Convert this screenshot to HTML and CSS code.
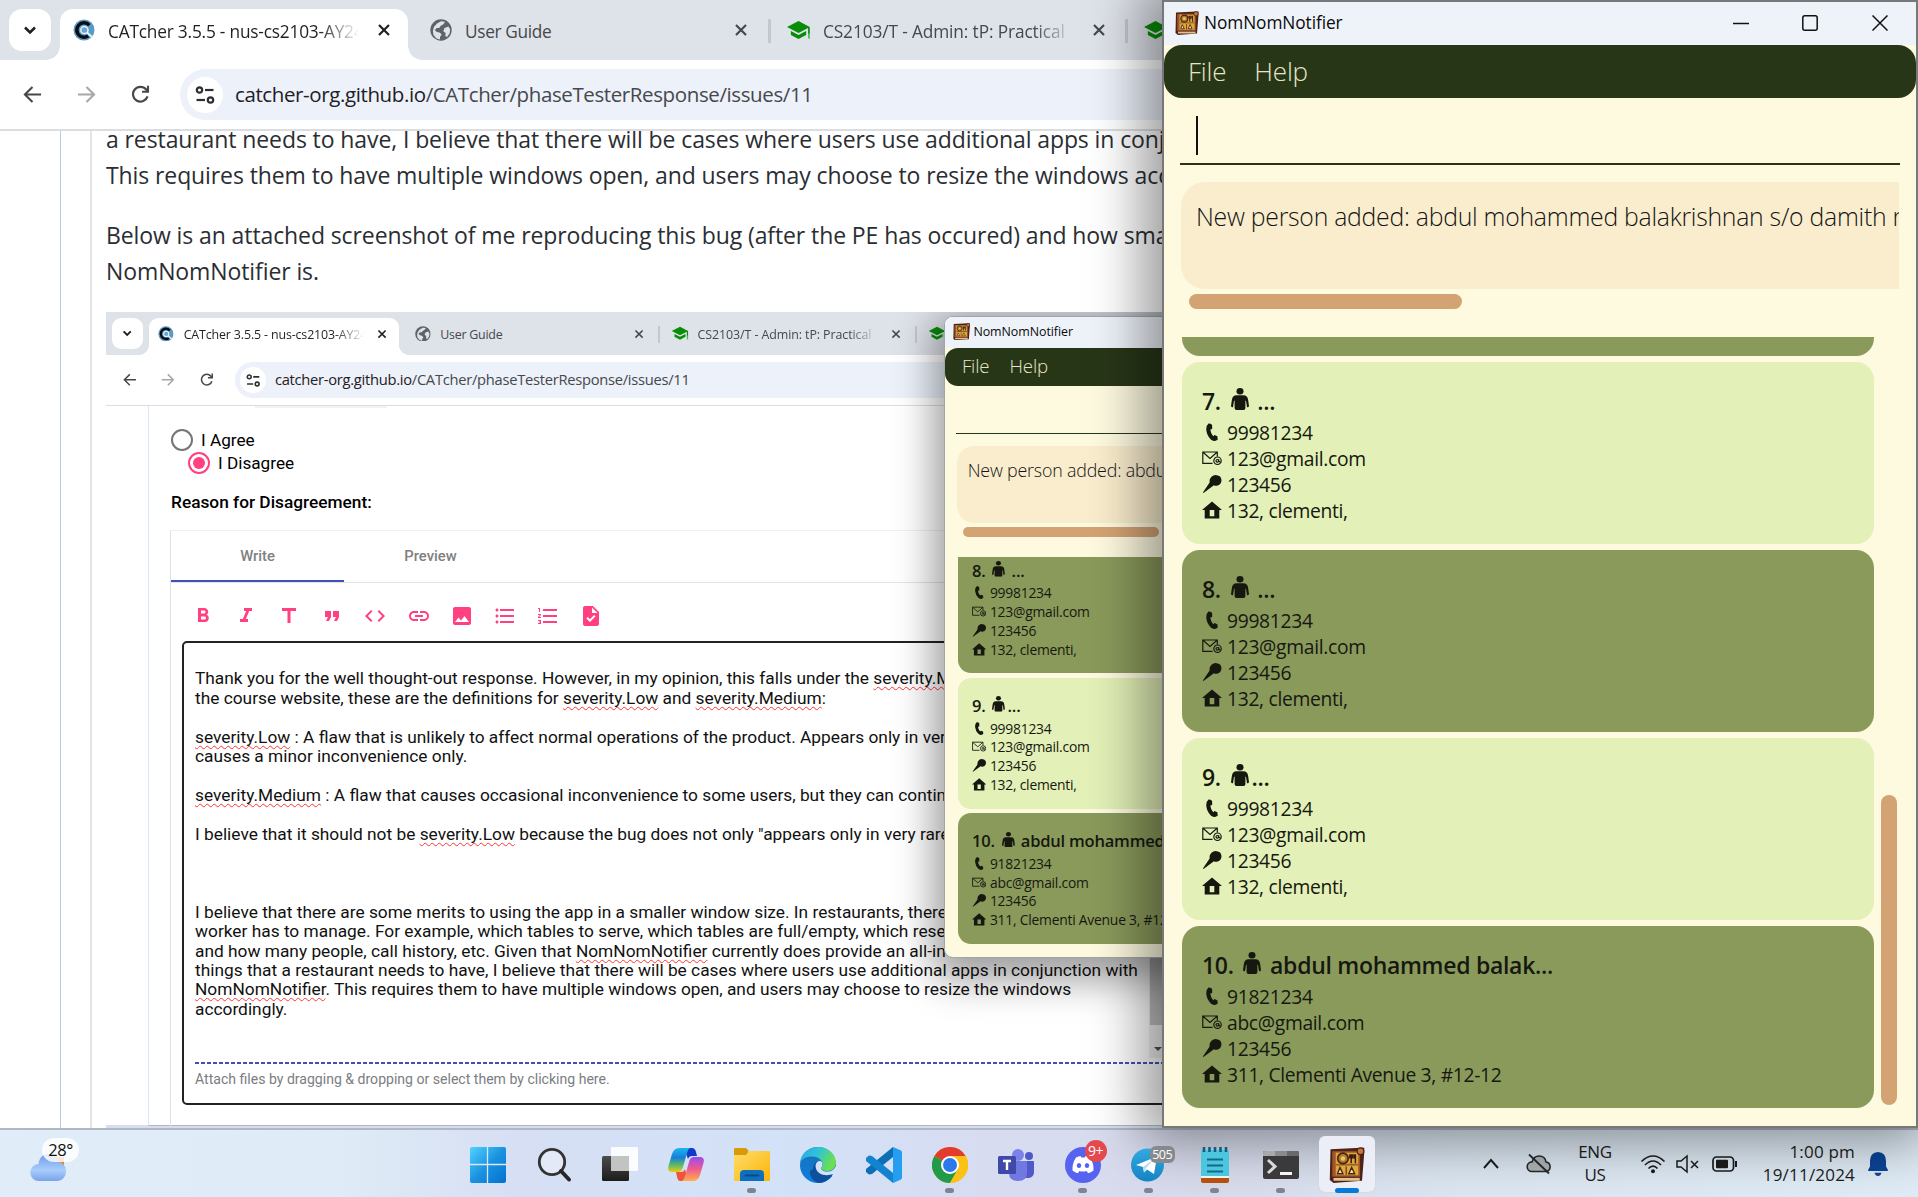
FILE: index.html
```html
<!DOCTYPE html>
<html lang="en">
<head>
<meta charset="utf-8">
<title>Desktop</title>
<link rel="stylesheet" href="styles.css">
</head>
<body>
<svg class="defs" width="0" height="0">
  <defs>
    <linearGradient id="gWin" x1="0" y1="0" x2="1" y2="1"><stop offset="0" stop-color="#4fd3ff"/><stop offset=".5" stop-color="#1b93e0"/><stop offset="1" stop-color="#0071cf"/></linearGradient>
    <linearGradient id="gDark" x1="0" y1="0" x2="0" y2="1"><stop offset="0" stop-color="#4c4c4c"/><stop offset="1" stop-color="#1c1c1c"/></linearGradient>
    <linearGradient id="gFold" x1="0" y1="0" x2="1" y2="1"><stop offset="0" stop-color="#ffdc6b"/><stop offset="1" stop-color="#fbb506"/></linearGradient>
    <linearGradient id="gCopA" x1="0" y1="0" x2="0" y2="1"><stop offset="0" stop-color="#1cb5f0"/><stop offset=".4" stop-color="#1480d8"/><stop offset=".75" stop-color="#6cbf5a"/><stop offset="1" stop-color="#f3cb10"/></linearGradient>
    <linearGradient id="gCopB" x1="0" y1="0" x2="0" y2="1"><stop offset="0" stop-color="#9a4cf0"/><stop offset=".5" stop-color="#ee5a90"/><stop offset="1" stop-color="#ffb04a"/></linearGradient>
    <linearGradient id="gEdge" x1="0" y1="0" x2="1" y2=".4"><stop offset="0" stop-color="#2aa6ea"/><stop offset=".5" stop-color="#2fc3d6"/><stop offset="1" stop-color="#6be04f"/></linearGradient>
    <linearGradient id="gEdgeB" x1="0" y1="0" x2="0" y2="1"><stop offset="0" stop-color="#1b6fb5"/><stop offset="1" stop-color="#0c7fe0"/></linearGradient>
    <linearGradient id="gCloud" x1="0" y1="0" x2="0" y2="1"><stop offset="0" stop-color="#6f9be8"/><stop offset=".6" stop-color="#a9cdfa"/><stop offset="1" stop-color="#78a3ea"/></linearGradient>
    <linearGradient id="gTel" x1="0" y1="0" x2="0" y2="1"><stop offset="0" stop-color="#32a9e0"/><stop offset="1" stop-color="#1583c4"/></linearGradient>

    <symbol id="chev" viewBox="0 0 20 20"><path d="M5 7.500l5 5 5-5" fill="none" stroke="#1f2023" stroke-width="2.600"/></symbol>
    <symbol id="catcher" viewBox="0 0 22 22"><circle cx="11" cy="11" r="10.500" fill="#5a9bc4"/><path d="M16.400 6.200A7.200 7.200 0 1 0 11 18.200c1.600 0 3-.4 4.200-1.300" fill="none" stroke="#0b0d12" stroke-width="3.400"/><circle cx="11.400" cy="11" r="3.600" fill="#6ba6cd" stroke="#e8f4fb" stroke-width="1.500"/><path d="M14 13.500l5 4.500" stroke="#e8f4fb" stroke-width="1.800"/></symbol>
    <symbol id="globe" viewBox="0 0 22 22"><circle cx="11" cy="11" r="10.700" fill="#5f6368"/><path d="M7 4.500l4-2.200 4 .4-1.500 2.600-2.800 1.500-1.200 2-3.200.4-1.500 2L7 13l2.500.5 2.200 2-1.700 2.500v2.600l-3.500-1.200-3-3.500-.6-4 1-4z" fill="#dee2e9"/><path d="M14.500 9l4-1.500 1.700 3-.6 4-2.600 3.600-1.700-1.200.3-3-2.300-1.600z" fill="#dee2e9"/></symbol>
    <symbol id="cap" viewBox="0 0 24 22"><path d="M12 1L0 7.300l12 6.300 10-5.200V15h1.800V7.300z" fill="#078d07"/><path d="M4 11.500v4.300l8 4.200 8-4.200v-4.300l-8 4.200z" fill="#078d07"/><path d="M22 14h1.800v6l-1.800-1z" fill="#45c04a"/></symbol>
    <symbol id="x" viewBox="0 0 14 14"><path d="M2 2l10 10M12 2L2 12" stroke="currentColor" stroke-width="2.200" fill="none"/></symbol>
    <symbol id="back" viewBox="0 0 20 20"><path d="M19 10H2.500M10 2L2 10l8 8" fill="none" stroke="currentColor" stroke-width="2.200"/></symbol>
    <symbol id="reload" viewBox="0 0 20 20"><path d="M17.400 12A7.800 7.800 0 1 1 16 4.800L18 7" fill="none" stroke="#46484c" stroke-width="2.300"/><path d="M19 .8v7.400h-7.400V6H16.800V.8z" fill="#46484c"/></symbol>
    <symbol id="tune" viewBox="0 0 20 18"><g fill="none" stroke="#2c2e31" stroke-width="2.200"><circle cx="4.500" cy="4" r="2.700"/><path d="M10 4h8.500"/><circle cx="15.500" cy="14" r="2.700"/><path d="M1.500 14H10"/></g></symbol>
    <symbol id="book" viewBox="0 0 24 24"><path d="M1 1.500l20-1h2.500V4L22 22.500 3 24 .5 22z" fill="#4c2219"/><path d="M2.200 2.800h18.500v17H2.200z" fill="#a2552a"/><path d="M4.500 3.800h15v15h-15z" fill="#dca83c"/><path d="M3 20.600h17.500v1.900H3z" fill="#e6c08c"/><path d="M4.500 11.200h15v1.200h-15z" fill="#9a6224"/><circle cx="9.300" cy="7.600" r="3.500" fill="#b07a2c" stroke="#4a2316" stroke-width="1.100"/><circle cx="9.300" cy="7.600" r="1.500" fill="#e8c46a"/><path d="M14.800 4.800v6M17.600 4.800v6M13.900 4.800v2.400h1.900V4.800M16.900 4.800v3" stroke="#3c1b12" stroke-width="1" fill="none"/><path d="M5.700 17.800l1.600-4.200 2 4.200zM13.200 17.800l1.900-4.200 2 4.200z" fill="#f6e2a4" stroke="#4a2316" stroke-width=".9"/><path d="M11.500 13v5.500" stroke="#7d4a20"/><circle cx="21" cy="2.800" r="2.200" fill="#c9753a" stroke="#4a2316" stroke-width=".8"/></symbol>

    <symbol id="person" viewBox="0 0 18 22"><ellipse cx="9" cy="3.200" rx="3.500" ry="3.200"/><path d="M5.500 7.300h7q4 0 4.600 4.500L18 18q-.3 1.600-2 1.300L15 13l-.6-.5V20q0 2-1.800 2H5.400q-1.800 0-1.800-2v-7.500L3 13l-1 6.300Q.3 19.600 0 18l.9-6.200Q1.500 7.300 5.500 7.300z"/></symbol>
    <symbol id="phone" viewBox="0 0 20 18"><path d="M6.500.5Q4 2.500 4.300 7q.6 5.500 4.500 9.500 2 2 4.700 1.300l2.200-1-.3-3.600-2.900-1.200-1.300 1.300Q8.600 10.500 8.300 6.600l1.900-.5-.1-4.200Q9 0 6.500.5z"/></symbol>
    <symbol id="mail" viewBox="0 0 20 14"><g fill="none" stroke="#161810" stroke-width="1.200"><path d="M10.500 12.300H.8V1h14.500v4.500M.8 1l7.200 6.500L15.300 1"/><circle cx="15.500" cy="9.700" r="3.700"/><circle cx="15.300" cy="9.800" r="1.300"/><path d="M16.700 8.300v2q.8 1 1.600 0"/></g></symbol>
    <symbol id="pin" viewBox="0 0 20 19"><path d="M7.500 8Q7 4 9.500 1.800T15 .2q4.500.3 5 5 0 4.600-4 5.900-3 .5-4-.4L1 18.900l-.6-.5z"/></symbol>
    <symbol id="home" viewBox="0 0 20 17"><path d="M10 0l10 8.500h-2.700V17H2.700V8.500H0zM7.700 8.500v6.300h4.600V8.500z" fill-rule="evenodd"/></symbol>

    <symbol id="mB" viewBox="0 0 24 24"><path d="M15.600 10.790c.97-.67 1.650-1.770 1.650-2.790 0-2.260-1.750-4-4-4H7v14h7.040c2.090 0 3.710-1.700 3.710-3.790 0-1.520-.86-2.820-2.150-3.420zM10 6.500h3c.83 0 1.500.67 1.500 1.500s-.67 1.500-1.500 1.500h-3v-3zm3.500 9H10v-3h3.500c.83 0 1.500.67 1.500 1.500s-.67 1.500-1.500 1.500z"/></symbol>
    <symbol id="mI" viewBox="0 0 24 24"><path d="M10 4v3h2.210l-3.420 8H6v3h8v-3h-2.210l3.420-8H18V4z"/></symbol>
    <symbol id="mT" viewBox="0 0 24 24"><path d="M5 4v3h5.500v12h3V7H19V4z"/></symbol>
    <symbol id="mQ" viewBox="0 0 24 24"><path d="M6 17h3l2-4V7H5v6h3zm8 0h3l2-4V7h-6v6h3z"/></symbol>
    <symbol id="mC" viewBox="0 0 24 24"><path d="M9.400 16.600L4.800 12l4.600-4.600L8 6l-6 6 6 6 1.400-1.400zm5.200 0l4.600-4.600-4.600-4.600L16 6l6 6-6 6-1.400-1.400z"/></symbol>
    <symbol id="mL" viewBox="0 0 24 24"><path d="M3.900 12c0-1.710 1.390-3.100 3.100-3.100h4V7H7c-2.760 0-5 2.240-5 5s2.240 5 5 5h4v-1.900H7c-1.710 0-3.100-1.390-3.100-3.100zM8 13h8v-2H8v2zm9-6h-4v1.900h4c1.710 0 3.100 1.390 3.100 3.100s-1.390 3.100-3.100 3.100h-4V17h4c2.760 0 5-2.240 5-5s-2.240-5-5-5z"/></symbol>
    <symbol id="mP" viewBox="0 0 24 24"><path d="M21 19V5c0-1.100-.9-2-2-2H5c-1.100 0-2 .9-2 2v14c0 1.100.9 2 2 2h14c1.100 0 2-.9 2-2zM8.500 13.500l2.500 3.010L14.500 12l4.500 6H5l3.500-4.500z"/></symbol>
    <symbol id="mU" viewBox="0 0 24 24"><path d="M4 10.500c-.83 0-1.500.67-1.500 1.500s.67 1.500 1.500 1.500 1.500-.67 1.500-1.500-.67-1.500-1.500-1.500zm0-6c-.83 0-1.500.67-1.500 1.500S3.170 7.500 4 7.500 5.500 6.830 5.500 6 4.830 4.500 4 4.500zm0 12c-.83 0-1.500.68-1.500 1.500s.68 1.500 1.500 1.500 1.500-.68 1.500-1.500-.67-1.500-1.500-1.500zM7 19h14v-2H7v2zm0-6h14v-2H7v2zm0-8v2h14V5H7z"/></symbol>
    <symbol id="mO" viewBox="0 0 24 24"><path d="M2 17h2v.5H3v1h1v.5H2v1h3v-4H2v1zm1-9h1V4H2v1h1v3zm-1 3h1.800L2 13.100v.9h3v-1H3.200L5 10.900V10H2v1zm5-6v2h14V5H7zm0 14h14v-2H7v2zm0-6h14v-2H7v2z"/></symbol>
    <symbol id="mF" viewBox="0 0 24 24"><path d="M14 2H6c-1.100 0-2 .9-2 2v16c0 1.100.9 2 2 2h12c1.100 0 2-.9 2-2V8l-6-6zm-3.060 16L7.400 14.460l1.410-1.410 2.120 2.120 4.240-4.240 1.410 1.410L10.940 18zM13 9V3.500L18.500 9H13z"/></symbol>
  </defs>
</svg>

<main class="desktop">
  <section class="browser">
    <div class="tabs">
      <span class="tab-search"><svg><use href="#chev"/></svg></span>
      <div class="tab active"><svg class="fav"><use href="#catcher"/></svg><span class="tt t1">CATcher 3.5.5 - nus-cs2103-AY24</span><svg class="tx"><use href="#x"/></svg></div>
      <div class="tab"><svg class="fav"><use href="#globe"/></svg><span class="tt">User Guide</span><svg class="tx"><use href="#x"/></svg></div>
      <div class="tab sep"><svg class="fav capi"><use href="#cap"/></svg><span class="tt t3">CS2103/T - Admin: tP: Practical</span><svg class="tx"><use href="#x"/></svg></div>
      <div class="tab sep"><svg class="fav capi"><use href="#cap"/></svg></div>
    </div>
    <div class="toolbar">
      <svg class="nav"><use href="#back"/></svg><svg class="nav fwd"><use href="#back"/></svg><svg class="nav"><use href="#reload"/></svg>
      <div class="url"><span class="site"><svg><use href="#tune"/></svg></span><span class="addr"><b>catcher-org.github.io</b>/CATcher/phaseTesterResponse/issues/11</span></div>
    </div>
    <div class="page">
      <div class="thread"><div class="comment">
        <p>a restaurant needs to have, I believe that there will be cases where users use additional apps in conjunction<br>This requires them to have multiple windows open, and users may choose to resize the windows accordingly.</p>
        <p>Below is an attached screenshot of me reproducing this bug (after the PE has occured) and how small<br>NomNomNotifier is.</p>
        <div class="shot">
          <div class="mini">
            <div class="tabs">
              <span class="tab-search"><svg><use href="#chev"/></svg></span>
              <div class="tab active"><svg class="fav"><use href="#catcher"/></svg><span class="tt t1">CATcher 3.5.5 - nus-cs2103-AY24</span><svg class="tx"><use href="#x"/></svg></div>
              <div class="tab"><svg class="fav"><use href="#globe"/></svg><span class="tt">User Guide</span><svg class="tx"><use href="#x"/></svg></div>
              <div class="tab sep"><svg class="fav capi"><use href="#cap"/></svg><span class="tt t3">CS2103/T - Admin: tP: Practical</span><svg class="tx"><use href="#x"/></svg></div>
              <div class="tab sep"><svg class="fav capi"><use href="#cap"/></svg></div>
            </div>
            <div class="toolbar">
              <svg class="nav"><use href="#back"/></svg><svg class="nav fwd"><use href="#back"/></svg><svg class="nav"><use href="#reload"/></svg>
              <div class="url"><span class="site"><svg><use href="#tune"/></svg></span><span class="addr"><b>catcher-org.github.io</b>/CATcher/phaseTesterResponse/issues/11</span></div>
            </div>
          </div>
          <div class="response">
            <div class="chip"></div>
            <label class="radio"><i></i>I Agree</label>
            <label class="radio on"><i></i>I Disagree</label>
            <h4>Reason for Disagreement:</h4>
            <div class="editor">
              <div class="etabs"><span class="cur">Write</span><span>Preview</span></div>
              <div class="etools">
                <svg><use href="#mB"/></svg><svg><use href="#mI"/></svg><svg><use href="#mT"/></svg><svg><use href="#mQ"/></svg><svg><use href="#mC"/></svg><svg><use href="#mL"/></svg><svg><use href="#mP"/></svg><svg><use href="#mU"/></svg><svg><use href="#mO"/></svg><svg><use href="#mF"/></svg>
              </div>
              <div class="area">
                <div class="arow">
                  <div class="text">Thank you for the well thought-out response. However, in my opinion, this falls under the <u>severity.Medium</u>
the course website, these are the definitions for <u>severity.Low</u> and <u>severity.Medium</u>:

<u>severity.Low</u> : A flaw that is unlikely to affect normal operations of the product. Appears only in very
causes a minor inconvenience only.

<u>severity.Medium</u> : A flaw that causes occasional inconvenience to some users, but they can continue

I believe that it should not be <u>severity.Low</u> because the bug does not only "appears only in very rare



I believe that there are some merits to using the app in a smaller window size. In restaurants, there
worker has to manage. For example, which tables to serve, which tables are full/empty, which rese
and how many people, call history, etc. Given that <u>NomNomNotifier</u> currently does provide an all-in
things that a restaurant needs to have, I believe that there will be cases where users use additional apps in conjunction with
<u>NomNomNotifier</u>. This requires them to have multiple windows open, and users may choose to resize the windows
accordingly.</div>
                  <div class="sbar"><i></i><b></b></div>
                </div>
                <div class="attach">Attach files by dragging &amp; dropping or select them by clicking here.</div>
              </div>
            </div>
          </div>
          <div class="nom small">
            <div class="title"><svg><use href="#book"/></svg><span>NomNomNotifier</span></div>
            <div class="menu"><span>File</span><span>Help</span></div>
            <div class="cmd"></div>
            <div class="result">New person added: abdul mohammed</div>
            <div class="hbar"></div>
            <div class="list">
              <div class="cards">
                <article class="card dark"><h3>8. <svg><use href="#person"/></svg> ...</h3><p><svg><use href="#phone"/></svg>99981234</p><p><svg><use href="#mail"/></svg>123@gmail.com</p><p><svg><use href="#pin"/></svg>123456</p><p><svg><use href="#home"/></svg>132, clementi,</p></article>
                <article class="card"><h3>9. <svg><use href="#person"/></svg>...</h3><p><svg><use href="#phone"/></svg>99981234</p><p><svg><use href="#mail"/></svg>123@gmail.com</p><p><svg><use href="#pin"/></svg>123456</p><p><svg><use href="#home"/></svg>132, clementi,</p></article>
                <article class="card dark"><h3>10. <svg><use href="#person"/></svg> abdul mohammed</h3><p><svg><use href="#phone"/></svg>91821234</p><p><svg><use href="#mail"/></svg>abc@gmail.com</p><p><svg><use href="#pin"/></svg>123456</p><p><svg><use href="#home"/></svg>311, Clementi Avenue 3, #12-12</p></article>
              </div>
            </div>
          </div>
        </div>
      </div></div>
    </div>
  </section>

  <section class="nom main">
    <div class="title"><svg><use href="#book"/></svg><span>NomNomNotifier</span>
      <div class="ctl">
        <svg viewBox="0 0 16 16"><path d="M0 8.500h16" stroke="#111" stroke-width="1.500"/></svg>
        <svg viewBox="0 0 16 16"><rect x=".8" y=".8" width="14.400" height="14.400" rx="2" fill="none" stroke="#111" stroke-width="1.500"/></svg>
        <svg viewBox="0 0 16 16"><path d="M.5.5l15 15M15.500.5l-15 15" stroke="#111" stroke-width="1.500"/></svg>
      </div>
    </div>
    <div class="menu"><span>File</span><span>Help</span></div>
    <div class="cmd"><i></i></div>
    <div class="result">New person added: abdul mohammed balakrishnan s/o damith ravi</div>
    <div class="hbar"></div>
    <div class="list">
      <div class="cards">
        <article class="card dark"></article>
        <article class="card"><h3>7. <svg><use href="#person"/></svg> ...</h3><p><svg><use href="#phone"/></svg>99981234</p><p><svg><use href="#mail"/></svg>123@gmail.com</p><p><svg><use href="#pin"/></svg>123456</p><p><svg><use href="#home"/></svg>132, clementi,</p></article>
        <article class="card dark"><h3>8. <svg><use href="#person"/></svg> ...</h3><p><svg><use href="#phone"/></svg>99981234</p><p><svg><use href="#mail"/></svg>123@gmail.com</p><p><svg><use href="#pin"/></svg>123456</p><p><svg><use href="#home"/></svg>132, clementi,</p></article>
        <article class="card"><h3>9. <svg><use href="#person"/></svg>...</h3><p><svg><use href="#phone"/></svg>99981234</p><p><svg><use href="#mail"/></svg>123@gmail.com</p><p><svg><use href="#pin"/></svg>123456</p><p><svg><use href="#home"/></svg>132, clementi,</p></article>
        <article class="card dark"><h3>10. <svg><use href="#person"/></svg> abdul mohammed balak...</h3><p><svg><use href="#phone"/></svg>91821234</p><p><svg><use href="#mail"/></svg>abc@gmail.com</p><p><svg><use href="#pin"/></svg>123456</p><p><svg><use href="#home"/></svg>311, Clementi Avenue 3, #12-12</p></article>
      </div>
      <div class="vbar"></div>
    </div>
  </section>

  <footer class="taskbar">
    <div class="weather">
      <svg width="36" height="28" viewBox="0 0 36 28"><path d="M20 4h14v9H20z" fill="#f07a1c"/><path d="M9 28a8.500 8.500 0 0 1-.5-17C9 5 13 1 18 1c5 0 8 3 9 7.500 5 0 9 4 9 9.800S32 28 27 28z" fill="url(#gCloud)"/></svg>
      <span>28°</span>
    </div>
    <div class="apps">
      <div class="app"><svg viewBox="0 0 36 36"><g fill="url(#gWin)"><rect width="36" height="36" rx="2"/></g><path d="M17.500 0v36M0 17.500h36" stroke="#dce6f8" stroke-width="1.300"/></svg></div>
      <div class="app"><svg viewBox="0 0 36 36"><circle cx="16" cy="15" r="12.700" fill="#e3e9f6" stroke="#333" stroke-width="2.800"/><path d="M25 24l8 8.500" stroke="#262626" stroke-width="4" stroke-linecap="round"/></svg></div>
      <div class="app"><svg viewBox="0 0 36 36"><rect y="9" width="27" height="25" rx="1.500" fill="url(#gDark)"/><rect x="9" y="0" width="27" height="24" rx="1" fill="#fff" fill-opacity=".9"/><rect x="9" y="9" width="18" height="15" fill="#c3c3c3"/></svg></div>
      <div class="app"><svg viewBox="0 0 36 36"><path d="M16 1h8q3 0 4 4l1 4h-5q-3 0-4 3z" fill="#1438c8"/><path d="M20 34h-8q-2 0-3-4l-1-5h5q3 0 4-3z" fill="#f0553c"/><path d="M11 1h11q-2 1-3 5l-4 14q-1 5-5 5H4q-5 0-3.500-6L4 7q2-6 7-6z" fill="url(#gCopA)"/><path d="M25 34H14q2-1 3-5l4-14q1-5 5-5h6q5 0 3.500 6L32 28q-2 6-7 6z" fill="url(#gCopB)"/></svg></div>
      <div class="app run"><svg viewBox="0 0 36 36"><path d="M0 2q0-1 1-1h11l3 3h-1v6H0z" fill="#d99a07"/><path d="M0 8h12l3-4h20q1 0 1 1v28q0 1-1 1H1q-1 0-1-1z" fill="url(#gFold)"/><path d="M6 34v-7q0-4 4-4h16q4 0 4 4v7z" fill="#0f6fbd"/><path d="M11.500 28.500h13" stroke="#0a4a85" stroke-width="1.800" stroke-linecap="round"/></svg></div>
      <div class="app"><svg viewBox="0 0 36 36"><circle cx="18" cy="18" r="18" fill="url(#gEdgeB)"/><path d="M0 16C1 6 9 0 18 0c11 0 18 8 18 15.500 0 6-4.500 8.500-9 8.500-3.500 0-6-1-6-2.500 0-1 1.500-1.500 1.500-4C22.500 13 18 9.500 12 9.500 6 9.500 2 12 0 16z" fill="url(#gEdge)"/><path d="M13 22c0-4 2.500-7 5-8 2.500 0 4.500 1.500 4.500 3.500 0 2.500-1.500 3-1.500 4 0 1.500 2.500 3 6.500 3 2.500 0 5-.8 6-1.500 1 1 .5 2 0 3-3 5.500-8 10-15 10-6-2-9-7-8.500-12z" fill="#0d509c"/><path d="M15.500 19c0-3 2-5 4-5s3 1.500 3 3.500c0 2.500-1.500 3-1.500 4 0 1.500 2.500 3 6.500 3 4 0 6.500-2 8.500-5v9l-3-1.500c-6 2.500-17 1.500-17.500-8z" fill="#d4e2f8"/><path d="M36 19v12l-4-2.500q2-2.500 1.500-3.500z" fill="#d4e2f8"/></svg></div>
      <div class="app"><svg viewBox="0 0 36 36"><path d="M27 0v10L6 27l-3 .5L0 25v-3z" fill="#0c6fb5"/><path d="M27 36V26L6 9l-3-.5L0 11v3z" fill="#1283cf"/><path d="M27 0l8 3.500 1 1.500v26l-1 1.500L27 36z" fill="#259df0"/></svg></div>
      <div class="app run"><svg viewBox="0 0 36 36"><circle cx="18" cy="18" r="18" fill="#fbc116"/><path d="M18 18L2.400 9A18 18 0 0 1 33.600 9z" fill="#e33b2e"/><path d="M18 18L2.400 9A18 18 0 0 0 18 36l7.800-13.500z" fill="#229a4a"/><path d="M33.600 9H18v9l7.800 4.500L18 36A18 18 0 0 0 33.600 9z" fill="#fbc116"/><circle cx="18" cy="18" r="9" fill="#fff"/><circle cx="18" cy="18" r="7" fill="#2a78ea"/></svg></div>
      <div class="app"><svg viewBox="0 0 36 36"><circle cx="20" cy="8" r="6" fill="#7b83eb"/><circle cx="31" cy="9" r="4" fill="#5059c9"/><path d="M26 14h9q1 0 1 1v10q0 5-5 6h-5z" fill="#5059c9"/><path d="M11 14h18v12q0 8-9 8t-9-8z" fill="#7178e0"/><rect y="9" width="18" height="18" rx="1.500" fill="#4048a8"/><path d="M5 14h8M9 14v9" stroke="#fff" stroke-width="2.400"/></svg></div>
      <div class="app run"><svg viewBox="0 0 36 36"><circle cx="18" cy="18" r="18" fill="#5662f0"/><path d="M11 10.500q2.500-1.300 4.500-1.500l.8 1.500h3.400l.8-1.500q2 .2 4.500 1.500 4 6 3.500 13-2.500 2-5.500 2.700l-1.300-2.200q-3.700 1-7.400 0L13 26.200Q10 25.500 7.500 23.500 7 16.500 11 10.500z" fill="#fff"/><ellipse cx="14" cy="18.500" rx="2.200" ry="2.500" fill="#5662f0"/><ellipse cx="22" cy="18.500" rx="2.200" ry="2.500" fill="#5662f0"/></svg><em class="badge red">9+</em></div>
      <div class="app run"><svg viewBox="0 0 36 36"><circle cx="16.500" cy="18" r="16.500" fill="url(#gTel)"/><path d="M5 18L26 9.500 23 27l-7-4.500-3 3-1-5.500z" fill="#fff"/><path d="M12 20l11-8-8 9-2 4.500z" fill="#b8d9ee"/></svg><em class="badge gray">505</em></div>
      <div class="app run"><svg viewBox="0 0 36 36"><rect x="4" y="3" width="28" height="31" rx="2" fill="#4cc5de"/><path d="M7 0v5M12.500 0v5M18 0v5M23.500 0v5M29 0v5" stroke="#0d5f86" stroke-width="2.600"/><path d="M10 12.500h16M10 18.500h16M10 24.500h16" stroke="#15688c" stroke-width="2.200"/><path d="M4 29h28v2H4z" fill="#e9f4f6"/><path d="M4 31h28v3q0 2-2 2H6q-2 0-2-2z" fill="#b5500f"/></svg></div>
      <div class="app run"><svg viewBox="0 0 36 36"><rect y="4" width="36" height="28" rx="2" fill="#3a3a3c"/><path d="M0 9V6q0-2 2-2h10v5z" fill="#a9a9a9"/><path d="M12 4h12v5H12z" fill="#8b8b8b"/><path d="M24 4h10q2 0 2 2v3H24z" fill="#6a6a6a"/><path d="M5 13l7 6.500L5 26" fill="none" stroke="#d9d9d9" stroke-width="3"/><path d="M17 26.500h12" stroke="#f4f4f4" stroke-width="3"/></svg></div>
      <div class="app run sel"><svg><use href="#book"/></svg></div>
    </div>
    <div class="tray">
      <svg width="18" height="18" viewBox="0 0 18 18"><path d="M2 13l7-8 7 8" fill="none" stroke="#1c1c1c" stroke-width="1.900"/></svg>
      <svg width="26" height="22" viewBox="0 0 26 22"><path d="M6 18.500a4.800 4.800 0 0 1 0-9.600C7.500 4.500 10 3 13 3c4 0 6.500 2.500 7 6a4.800 4.800 0 0 1 0 9.500z" fill="#aeb2b6" stroke="#26282a" stroke-width="1.600"/><path d="M3 1.500l20 19" stroke="#26282a" stroke-width="1.800"/></svg>
      <span class="lang">ENG<br>US</span>
      <svg width="26" height="20" viewBox="0 0 26 20"><g fill="none" stroke="#1c1c1c" stroke-width="1.700"><path d="M1.500 7.500Q7 2 13 2t11.500 5.500"/><path d="M5 11q4-4 8-4t8 4"/><path d="M8.500 14.500q2.200-2.300 4.500-2.300t4.500 2.300"/></g><circle cx="13" cy="17.300" r="2" fill="#1c1c1c"/></svg>
      <svg width="24" height="20" viewBox="0 0 24 20"><path d="M1 7h4l6-5v16l-6-5H1zM15 7l7 7M22 7l-7 7" fill="none" stroke="#1c1c1c" stroke-width="1.500"/></svg>
      <svg width="26" height="16" viewBox="0 0 26 16"><rect x="1" y="1" width="20.500" height="14" rx="3.500" fill="none" stroke="#1c1c1c" stroke-width="1.700"/><rect x="4" y="3.800" width="12" height="8.400" rx="1" fill="#1c1c1c"/><path d="M24 5v6" stroke="#1c1c1c" stroke-width="2"/></svg>
      <span class="clock">1:00 pm<br>19/11/2024</span>
      <svg width="22" height="24" viewBox="0 0 22 24"><path d="M11 0Q19 .5 19 9v5.500l2 3.500q0 1-1 1H2q-1 0-1-1l2-3.500V9Q3 .5 11 0z" fill="#0a4596"/><path d="M7.500 20.800h7Q13.500 24 11 24t-3.500-3.200z" fill="#0a4596"/></svg>
    </div>
  </footer>
</main>
</body>
</html>
```
FILE: styles.css
```css
* { box-sizing: border-box; }
body { margin: 0; font-family: "Open Sans", "Noto Sans", sans-serif; color: #1f2023; }
p, h3, h4 { margin: 0; }
svg { display: block; flex: none; }
.defs { position: absolute; }

.desktop { position: relative; width: 1918px; height: 1197px; overflow: hidden; display: flex; flex-direction: column; background: #fff; }

/* browser */
.browser { height: 1128px; overflow: hidden; display: flex; flex-direction: column; }
.tabs { height: 60px; background: #dee2e9; display: flex; padding: 9px 0 0 9px; overflow: hidden; }
.tab-search { width: 42px; height: 42px; border-radius: 13px; background: #fff; display: grid; place-items: center; margin-right: 9px; }
.tab-search svg { width: 20px; height: 20px; }
.tab { position: relative; width: 357px; height: 42px; flex: none; display: flex; align-items: center; padding-left: 22px; color: #46484c; }
.tab.active { width: 348px; height: 51px; padding: 0 0 9px 13px; background: #fff; border-radius: 13px 13px 0 0; color: #1f2023; }
.tab.active::before, .tab.active::after { content: ""; position: absolute; bottom: 0; width: 14px; height: 14px; }
.tab.active::before { left: -14px; background: radial-gradient(circle at 0 0, transparent 13.500px, #fff 14px); }
.tab.active::after { right: -14px; background: radial-gradient(circle at 100% 0, transparent 13.500px, #fff 14px); }
.tab.sep { border-left: 3px solid transparent; padding-left: 15px; margin-left: 3px; width: 354px; }
.tab.sep::before { content: ""; position: absolute; left: -3px; top: 10px; width: 3px; height: 24px; background: #c4c7cb; }
.fav { width: 22px; height: 22px; margin-right: 13px; }
.capi { width: 25px; height: 21px; margin-right: 12px; }
.tt { width: 251px; padding-top: 2px; overflow: hidden; white-space: nowrap; font-size: 17.300px; letter-spacing: -.35px; }
.t1, .t3 { -webkit-mask-image: linear-gradient(90deg, #000 84%, transparent 100%); mask-image: linear-gradient(90deg, #000 84%, transparent 100%); }
.t1 { letter-spacing: -.2px; }
.t3 { letter-spacing: -.12px; }
.tab .tx { width: 14px; height: 14px; margin-left: 18px; }
.toolbar { height: 71px; border-bottom: 2px solid #dcdde0; background: #fff; display: flex; align-items: center; padding-left: 23px; }
.nav { width: 19px; height: 19px; margin-right: 35px; color: #46484c; }
.nav.fwd { transform: scaleX(-1); color: #a5a7aa; }
.url { flex: 1; height: 51px; margin-left: -5px; border-radius: 26px 0 0 26px; background: #ecf1fa; display: flex; align-items: center; padding-left: 7px; white-space: nowrap; }
.site { width: 36px; height: 36px; border-radius: 50%; background: #fff; display: grid; place-items: center; margin-right: 12px; }
.site svg { width: 20px; height: 18px; }
.addr { padding-bottom: 2px; font-size: 20.500px; letter-spacing: -.39px; color: #46484c; }
.addr b { font-weight: 400; color: #1f2023; }

.page { flex: 1; overflow: hidden; background: #fff; padding-left: 60px; }
.thread { border-left: 1px solid #b9cce6; padding-left: 29px; }
.comment { border-left: 2px solid #e3e4e6; padding: 0 0 0 14px; }
.comment > p { margin: 0 0 23px; font-size: 23px; letter-spacing: -.1px; line-height: 36px; white-space: nowrap; color: #2a2e33; }
.comment > p:first-child { margin: -10px 0 24px; }
.shot { position: relative; height: 817px; overflow: hidden; background: linear-gradient(#fff, #fff) 0 0 / 100% 813px no-repeat #d5def0; }
.mini { zoom: .719; }

/* tester response form */
.response { height: 720px; margin-left: 42px; border-left: 1.500px solid #dbe5f8; border-bottom: 1px solid #b0b6c2; padding-left: 22px; font-family: Roboto, sans-serif; color: #000; }
.chip { width: 132px; height: 2px; margin-left: 84px; background: #f1f2f4; }
.radio { display: flex; align-items: center; height: 23px; font-size: 17.200px; gap: 8px; }
.chip + .radio { margin-top: 20px; }
.radio i { width: 22px; height: 22px; border: 2.300px solid #757575; border-radius: 50%; display: grid; place-items: center; }
.radio.on { margin-left: 17px; }
.radio.on i { border-color: #ff4081; }
.radio.on i::after { content: ""; width: 12px; height: 12px; border-radius: 50%; background: #ff4081; }
h4 { margin: 18px 0 17px; font-size: 17.300px; line-height: 21px; font-weight: 500; }
.editor { height: 596px; margin-left: -1px; border-left: 1px solid #e2e2e4; border-top: 1px solid #f0f0f0; }
.etabs { display: flex; height: 52px; border-bottom: 1px solid #e4e4e6; }
.etabs span { width: 173px; text-align: center; font-size: 14.800px; font-weight: 500; line-height: 51px; color: #808080; }
.etabs .cur { height: 51px; border-bottom: 2.500px solid #3f51b5; }
.etools { display: flex; align-items: center; height: 58px; padding: 8px 0 0 10px; }
.etools svg { width: 24px; height: 24px; margin: 0 9.600px; fill: #ff4081; }
.area { height: 464px; margin-left: 11px; border: 2px solid #222; border-radius: 5px; display: flex; flex-direction: column; padding-left: 11px; }
.arow { height: 419px; display: flex; }
.text { width: 954px; padding-top: 26px; white-space: pre; font-size: 17.320px; line-height: 19.450px; color: #111; }
.text u { text-decoration: underline wavy #f33 1px; text-underline-offset: 2px; text-decoration-skip-ink: none; }
.sbar { width: 17px; height: 415px; background: #f1f1f1; display: flex; flex-direction: column; align-items: center; }
.sbar i { width: 15px; height: 382px; background: #c1c1c1; }
.sbar b { margin-top: 22px; border: 4px solid transparent; border-top-color: #505050; }
.attach { padding-top: 7px; font-size: 14.070px; line-height: 21px; color: #7a7d82; background: repeating-linear-gradient(90deg, #3f51b5 0 4px, #fff 4px 6px) 0 0 / 100% 2px no-repeat; }

/* NomNomNotifier */
.nom { position: absolute; background: #fefae0; display: flex; flex-direction: column; border: 2px solid #77787a; overflow: hidden; }
.nom.main { left: 1162px; top: 0; width: 756px; height: 1128px; box-shadow: -6px 0 50px 14px rgba(0,0,0,.4); }
.nom.small { zoom: .719; left: 1165px; top: 5px; width: 756px; height: 893px; border-color: #a3a6a8; border-radius: 12px; box-shadow: 0 16px 54px 14px rgba(0,0,0,.38); }
.title { height: 43px; flex: none; background: #eef3fa; display: flex; align-items: center; padding: 0 0 2px 11px; color: #0a0a0a; }
.title > svg { width: 24px; height: 24px; margin-right: 5px; }
.title span { font-size: 17.300px; letter-spacing: -.08px; }
.ctl { margin-left: auto; display: flex; gap: 53.500px; padding-right: 28.500px; }
.ctl svg { width: 16px; height: 16px; }
.menu { height: 53px; flex: none; background: #283618; border-radius: 18px; display: flex; align-items: center; gap: 28px; padding: 0 0 2px 24px; font-size: 26px; font-weight: 300; color: #e6e6c6; letter-spacing: -.2px; }
.cmd { height: 67px; flex: none; margin: 0 16px 0 16px; border-bottom: 2px solid #283618; padding: 18px 0 0 16px; }
.cmd i { display: block; width: 2px; height: 39px; background: #111; }
.result { height: 107px; flex: none; margin: 17px 17px 0 17px; padding-left: 15px; background: #faedcd; border-radius: 24px 0 0 24px; overflow: hidden; white-space: nowrap; font-size: 24.800px; font-weight: 300; letter-spacing: -.26px; line-height: 69px; color: #141414; }
.hbar { width: 273px; height: 15px; flex: none; margin: 5px 0 0 25px; border-radius: 8px; background: #d4a373; }
.list { flex: 1; min-height: 0; margin: 28px 19px 18px 18px; overflow: hidden; display: flex; justify-content: space-between; }
.cards { width: 692px; display: flex; flex-direction: column; justify-content: flex-end; gap: 6px; }
.card { height: 182px; flex: none; background: #e3f0b7; border-radius: 18px; padding: 21px 0 0 20px; color: #161810; fill: #161810; }
.card.dark { background: #8a9a5b; }
.card h3 { display: flex; height: 36px; align-items: center; padding-bottom: 1px; font-size: 23px; font-weight: 600; white-space: pre; letter-spacing: -.3px; }
.card h3 svg { width: 18px; height: 22px; margin: 0 3px 3px 4px; }
.card p { display: flex; align-items: center; height: 26.100px; font-size: 19.300px; letter-spacing: -.32px; white-space: nowrap; }
.card p svg { width: 20px; height: 18px; margin-right: 5px; }
.vbar { width: 16px; height: 310px; border-radius: 8px; background: #d4a373; align-self: flex-end; margin-bottom: 3px; }

/* taskbar */
.taskbar { height: 69px; border-top: 2px solid #b1b7c3; display: flex; background: linear-gradient(90deg, #e0edf8 0, #dfebf6 340px, #d6dff4 520px, #d3e2f8 780px, #d7dcf1 980px, #d8dbec 1200px, #dbe6f1 1450px, #dfebf5 1918px); }
.weather { position: relative; width: 454.600px; padding: 23px 0 0 30px; }
.weather span { position: absolute; left: 42px; top: 8px; width: 37px; height: 24px; border-radius: 12px; background: rgba(255,255,255,.82); font-size: 16.500px; line-height: 23px; text-align: center; color: #111; letter-spacing: -.4px; }
.apps { display: flex; }
.app { position: relative; width: 66.120px; height: 67px; padding: 17px 15px; }
.app svg { position: relative; width: 36px; height: 36px; }
.app.run::after { content: ""; position: absolute; left: 28px; bottom: 4px; width: 9px; height: 5px; border-radius: 3px; background: #7f8590; }
.app.sel::before { content: ""; position: absolute; left: 5px; top: 6px; width: 56px; height: 56px; border-radius: 6px; background: #eceef7; box-shadow: 0 0 1px #b5b8c8; }
.app.sel::after { left: 21px; width: 24px; background: #0a78d6; }
.badge { position: absolute; font-style: normal; color: #fff; text-align: center; letter-spacing: -.5px; }
.red { left: 35px; top: 10px; width: 22px; height: 22px; border-radius: 50%; background: #e5484d; font-size: 14px; line-height: 21px; }
.gray { left: 34px; top: 16px; width: 25px; height: 17px; border-radius: 6px; background: #86898d; font-size: 12.500px; line-height: 17px; }
.tray { margin-left: auto; margin-right: 17px; display: grid; grid-template-columns: 48px 48px 64px 52px 18px 56px 102px 46px; align-items: center; justify-items: center; font-size: 17px; line-height: 22.500px; color: #1c1c1c; letter-spacing: -.3px; }
.tray .lang { text-align: center; }
.tray .clock { text-align: right; justify-self: end; white-space: nowrap; letter-spacing: .2px; }
```
